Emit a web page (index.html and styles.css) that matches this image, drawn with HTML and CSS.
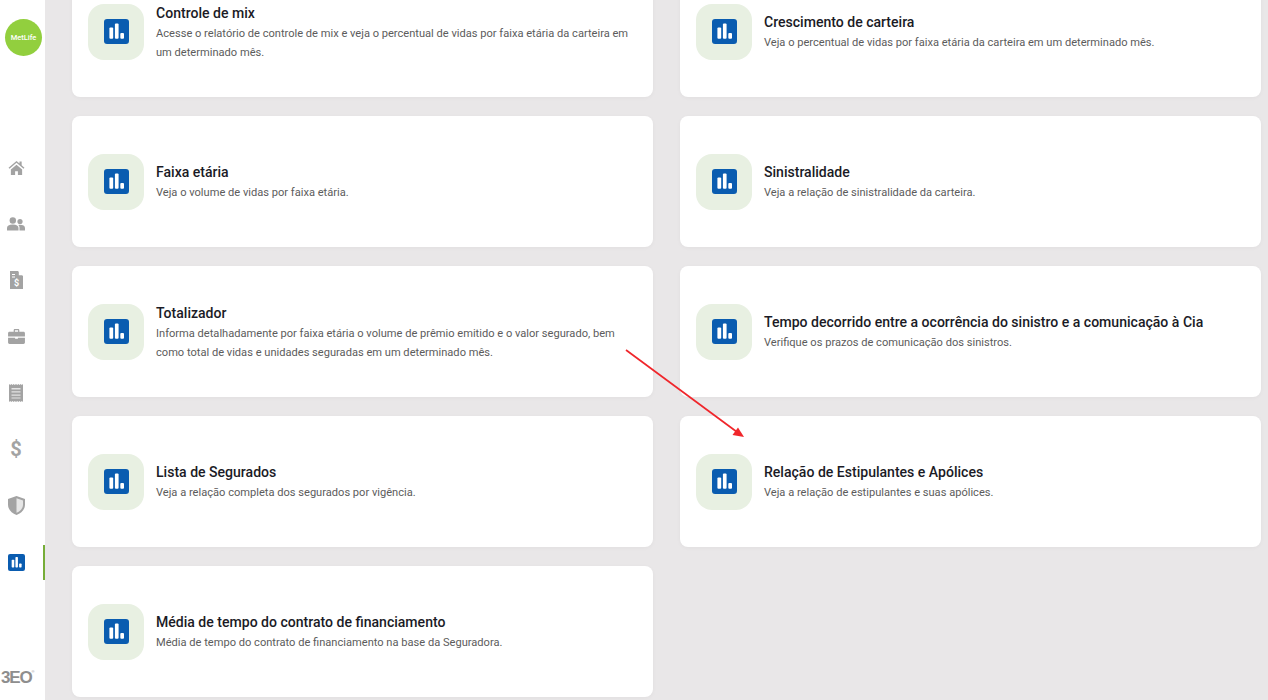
FILE: index.html
```html
<!DOCTYPE html>
<html lang="pt-BR">

<head>
  <meta charset="utf-8" />
  <title>Relatórios</title>
  <link rel="stylesheet" href="styles.css">
</head>

<body>
  <svg class="defs" width="0" height="0">
    <symbol id="chart" viewBox="0 0 24.500 24.500">
      <rect width="24.500" height="24.500" rx="3" fill="#0a5cb0" />
      <rect x="5.300" y="8.300" width="3.700" height="11" rx="1" fill="#fff" />
      <rect x="10.700" y="4.300" width="3.600" height="15" rx="1" fill="#fff" />
      <rect x="16" y="13.700" width="3.600" height="5.600" rx="1" fill="#fff" />
    </symbol>
  </svg>

  <div class="app">
    <aside class="sidebar">
      <div class="logo">MetLife</div>
      <nav class="nav">
        <a class="nav_item">
          <svg width="17" height="15" viewBox="0 0 18 16"><path d="M9 1 .5 8.200l1 1.100L9 3l7.500 6.300 1-1.100L14.500 5.700V1.500h-2.300v2.300zM3 10v6h4.500v-4h3v4H15v-6L9 5z" fill="#a3a3a3" /></svg>
        </a>
        <a class="nav_item">
          <svg width="18" height="14" viewBox="0 0 18 14"><circle cx="5.800" cy="3.500" r="3.200" fill="#a3a3a3" /><circle cx="13" cy="4.500" r="2.600" fill="#a3a3a3" /><path d="M0 13.500V11c0-2 2-3.500 5.800-3.500s5.700 1.500 5.700 3.500v2.500zM12.500 13.500V10.500c0-1-.4-2-1.200-2.600C14.800 7.300 18 8.500 18 11v2.500z" fill="#a3a3a3" /></svg>
        </a>
        <a class="nav_item">
          <svg width="13" height="18" viewBox="0 0 13 18"><path d="M0 0h8l5 5v13H0z" fill="#a3a3a3" /><path d="M8.800 0 13 4.200H8.800z" fill="#fff" /><path d="M2 3h3v1H2zM2 5.500h3v1H2z" fill="#fff" /><text x="6.500" y="15" class="nav_dollar">$</text></svg>
        </a>
        <a class="nav_item">
          <svg width="17" height="15" viewBox="0 0 18 16"><path d="M6 3V1.200C6 .5 6.500 0 7.200 0h3.600c.7 0 1.200.5 1.200 1.200V3h4.500c.8 0 1.500.7 1.500 1.500V8H0V4.500C0 3.700.7 3 1.500 3zm1.300 0h3.400V1.300H7.300zM0 9.200h7.500v1.300h3V9.200H18v5.300c0 .8-.7 1.500-1.500 1.500h-15C.7 16 0 15.300 0 14.500z" fill="#a3a3a3" /></svg>
        </a>
        <a class="nav_item">
          <svg width="14" height="18" viewBox="0 0 14 18"><path d="M0 0l1.200 1L2.300 0l1.200 1L4.700 0l1.100 1L7 0l1.200 1L9.300 0l1.200 1 1.200-1 1.100 1L14 0v18l-1.200-1-1.100 1-1.200-1-1.200 1-1.100-1L7 18l-1.200-1-1.100 1-1.200-1-1.200 1-1.100-1L0 18z" fill="#a3a3a3" /><path d="M2.500 4h9v1.400h-9zM2.500 7.200h9v1.400h-9zM2.500 10.400h9v1.400h-9zM2.500 13.400h9v1.200h-9z" fill="#e4e4e4" /></svg>
        </a>
        <a class="nav_item nav_money">$</a>
        <a class="nav_item">
          <svg width="17" height="19" viewBox="0 0 17 19"><path d="M8.500 0 17 3v5.500c0 4.800-3.500 8.700-8.500 10.500C3.500 17.200 0 13.300 0 8.500V3z" fill="#a3a3a3" /><path d="M8.500 2.300 15 4.600v3.900c0 3.600-2.500 6.700-6.500 8.300z" fill="#e6e6e6" /></svg>
        </a>
        <a class="nav_item nav_active">
          <svg width="17" height="17"><use href="#chart" /></svg>
        </a>
      </nav>
      <div class="geo">3EO<sup>®</sup></div>
    </aside>

    <main class="content">
      <div class="cards">
        <div class="card">
          <div class="card_icon"><svg width="25" height="25"><use href="#chart" /></svg></div>
          <div class="card_text">
            <div class="card_title">Controle de mix</div>
            <div class="card_desc">Acesse o relatório de controle de mix e veja o percentual de vidas por faixa etária da carteira em um determinado mês.</div>
          </div>
        </div>
        <div class="card">
          <div class="card_icon"><svg width="25" height="25"><use href="#chart" /></svg></div>
          <div class="card_text">
            <div class="card_title">Crescimento de carteira</div>
            <div class="card_desc">Veja o percentual de vidas por faixa etária da carteira em um determinado mês.</div>
          </div>
        </div>
        <div class="card">
          <div class="card_icon"><svg width="25" height="25"><use href="#chart" /></svg></div>
          <div class="card_text">
            <div class="card_title">Faixa etária</div>
            <div class="card_desc">Veja o volume de vidas por faixa etária.</div>
          </div>
        </div>
        <div class="card">
          <div class="card_icon"><svg width="25" height="25"><use href="#chart" /></svg></div>
          <div class="card_text">
            <div class="card_title">Sinistralidade</div>
            <div class="card_desc">Veja a relação de sinistralidade da carteira.</div>
          </div>
        </div>
        <div class="card">
          <div class="card_icon"><svg width="25" height="25"><use href="#chart" /></svg></div>
          <div class="card_text">
            <div class="card_title">Totalizador</div>
            <div class="card_desc">Informa detalhadamente por faixa etária o volume de prêmio emitido e o valor segurado, bem como total de vidas e unidades seguradas em um determinado mês.</div>
          </div>
        </div>
        <div class="card">
          <div class="card_icon"><svg width="25" height="25"><use href="#chart" /></svg></div>
          <div class="card_text">
            <div class="card_title">Tempo decorrido entre a ocorrência do sinistro e a comunicação à Cia</div>
            <div class="card_desc">Verifique os prazos de comunicação dos sinistros.</div>
          </div>
        </div>
        <div class="card">
          <div class="card_icon"><svg width="25" height="25"><use href="#chart" /></svg></div>
          <div class="card_text">
            <div class="card_title">Lista de Segurados</div>
            <div class="card_desc">Veja a relação completa dos segurados por vigência.</div>
          </div>
        </div>
        <div class="card">
          <div class="card_icon"><svg width="25" height="25"><use href="#chart" /></svg></div>
          <div class="card_text">
            <div class="card_title">Relação de Estipulantes e Apólices</div>
            <div class="card_desc">Veja a relação de estipulantes e suas apólices.</div>
          </div>
        </div>
        <div class="card">
          <div class="card_icon"><svg width="25" height="25"><use href="#chart" /></svg></div>
          <div class="card_text">
            <div class="card_title">Média de tempo do contrato de financiamento</div>
            <div class="card_desc">Média de tempo do contrato de financiamento na base da Seguradora.</div>
          </div>
        </div>
      </div>
    </main>
  </div>

  <svg class="arrow" width="130" height="100" viewBox="0 0 130 100">
    <line x1="2" y1="2" x2="113" y2="84" stroke="#f0262b" stroke-width="1.700" />
    <path d="M120 89 108.500 87 114 79.500z" fill="#f0262b" />
  </svg>
</body>

</html>
```

FILE: styles.css
```css
html, body {
  margin: 0;
  height: 700px;
  overflow: hidden;
}

body {
  font-family: "Roboto", "Liberation Sans", sans-serif;
  background: #e9e7e8;
}

.defs {
  position: absolute;
}

.app {
  display: flex;
  height: 700px;
}

.sidebar {
  width: 45px;
  flex-shrink: 0;
  background: #fff;
  display: flex;
  flex-direction: column;
}

.logo {
  width: 37px;
  height: 37px;
  margin: 19px 0 0 5px;
  border-radius: 50%;
  background: #92cf3e;
  color: #fff;
  font-size: 7.500px;
  font-weight: 500;
  line-height: 37px;
  text-align: center;
}

.nav {
  margin-top: 83px;
  display: flex;
  flex-direction: column;
}

.nav_item {
  height: 56.400px;
  display: flex;
  align-items: center;
  justify-content: center;
  padding-right: 13px;
  box-sizing: border-box;
}

.nav_dollar {
  font-size: 9px;
  font-weight: bold;
  fill: #fff;
  text-anchor: middle;
}

.nav_money {
  color: #a3a3a3;
  font-size: 20px;
  font-weight: 700;
}

.nav_active {
  height: 35px;
  margin-top: 11px;
  border-right: 2px solid #76ad38;
  padding-right: 11px;
}

.geo {
  margin-top: 88px;
  padding-left: 1px;
  color: #8e8e8e;
  font-family: "Liberation Sans", sans-serif;
  font-size: 17px;
  font-weight: bold;
  letter-spacing: -1.200px;
  line-height: 20px;
}

.geo sup {
  font-size: 4px;
  font-weight: normal;
  letter-spacing: 0;
  vertical-align: 10px;
  line-height: 0;
}

.content {
  flex: 1;
  padding-left: 27px;
  padding-right: 7px;
}

.cards {
  margin-top: -34px;
  display: grid;
  grid-template-columns: 581px 581px;
  grid-auto-rows: 131px;
  column-gap: 27px;
  row-gap: 19px;
}

.card {
  display: flex;
  align-items: center;
  gap: 12px;
  padding: 0 16px;
  background: #fff;
  border-radius: 8px;
  box-shadow: 0 1px 4px rgba(0, 0, 0, 0.04);
}

.card_icon {
  width: 56px;
  height: 56px;
  flex-shrink: 0;
  display: flex;
  align-items: center;
  justify-content: center;
  background: #e8f0e2;
  border-radius: 16px;
}

.card_title {
  color: #1b1b26;
  font-size: 14.050px;
  font-weight: 500;
  line-height: 23px;
}

.card_desc {
  color: #5c5c5c;
  font-size: 11.100px;
  line-height: 19px;
  margin-top: -1px;
}

.arrow {
  position: absolute;
  left: 624px;
  top: 348px;
}
```
